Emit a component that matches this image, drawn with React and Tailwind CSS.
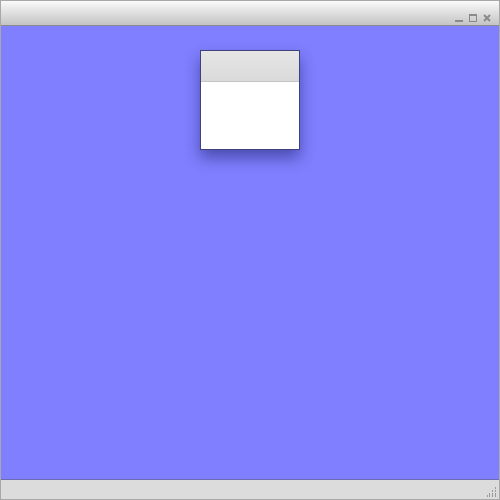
import React from 'react';

const TitleButtons = () => (
  <div className="flex items-center gap-[6px] pr-[8px] pt-[9px]">
    <svg width="8" height="8" viewBox="0 0 8 8">
      <rect x="0" y="6" width="8" height="2" fill="#8a8a8a" />
    </svg>
    <svg width="8" height="8" viewBox="0 0 8 8">
      <rect x="0.5" y="0.5" width="7" height="7" fill="none" stroke="#8a8a8a" />
      <rect x="0" y="0" width="8" height="2" fill="#8a8a8a" />
    </svg>
    <svg width="8" height="8" viewBox="0 0 8 8">
      <path d="M1 1 L7 7 M7 1 L1 7" stroke="#8a8a8a" strokeWidth="2" />
    </svg>
  </div>
);

const Grip = () => (
  <svg width="10" height="10" viewBox="0 0 10 10">
    {[[8, 0], [8, 3], [8, 6], [8, 8], [5, 3], [5, 6], [5, 8], [2, 6], [2, 8], [0, 8]].map(([x, y], i) => (
      <rect key={i} x={x} y={y} width="1" height="2" fill="#9a9a9a" />
    ))}
  </svg>
);

export default function App() {
  return (
    <div className="w-[500px] h-[500px] flex flex-col border border-[#a8a8a8] bg-[#dcdcdc]">
      <div className="h-[25px] shrink-0 flex justify-end bg-gradient-to-b from-[#fafafa] to-[#c4c4c4] border-b border-[#8c8c8c]">
        <TitleButtons />
      </div>
      <div className="relative flex-1 bg-[#7f7fff] border-b border-[#6c6cb0]">
        <div className="absolute left-[199px] top-[24px] w-[100px] h-[100px] flex flex-col border border-[#40407a] bg-white shadow-[0_8px_14px_rgba(0,0,60,0.4)]">
          <div className="h-[31px] shrink-0 bg-gradient-to-b from-[#e6e6e6] to-[#dadada] border-b border-[#c4c4c4]" />
          <div className="flex-1 bg-white" />
        </div>
      </div>
      <div className="h-[19px] shrink-0 flex justify-end items-end pr-[2px] pb-[2px] bg-[#dcdcdc]">
        <Grip />
      </div>
    </div>
  );
}
